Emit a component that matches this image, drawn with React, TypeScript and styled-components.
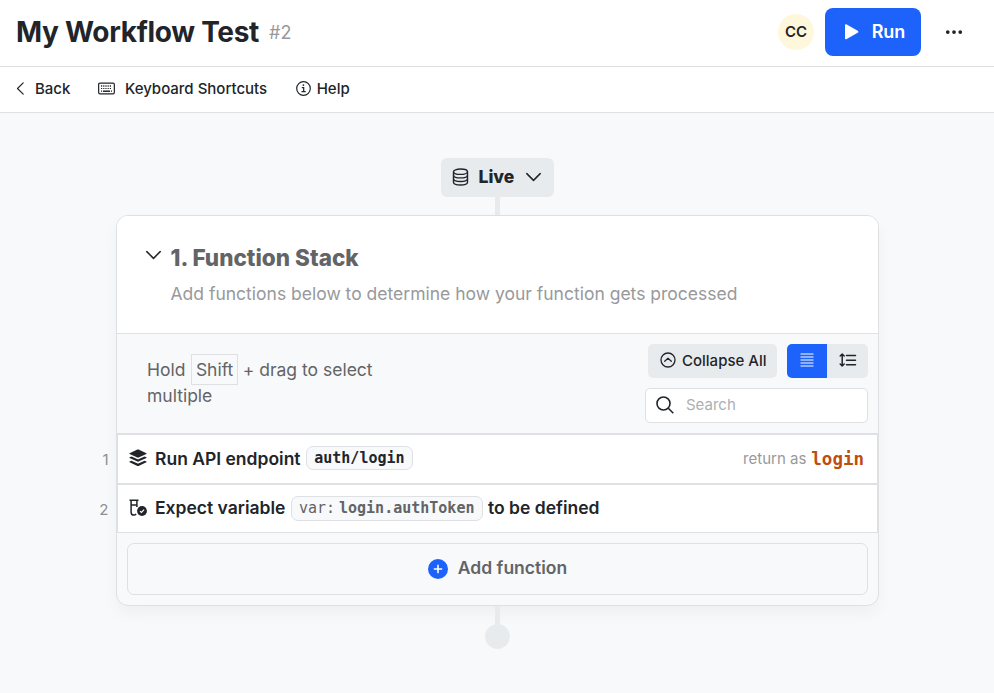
import React from "react";
import styled, { createGlobalStyle } from "styled-components";
import { BsThreeDots } from "react-icons/bs";

const GlobalStyle = createGlobalStyle`
  *, *::before, *::after { box-sizing: border-box; }
  body {
    margin: 0;
    background: #f8f9fb;
    color: #212529;
    font-family: Inter, "Liberation Sans", sans-serif;
    -webkit-font-smoothing: antialiased;
  }
  button, input { font-family: inherit; color: inherit; margin: 0; }
  svg { display: block; flex: none; }
`;

const mono = `"DejaVu Sans Mono", "Liberation Mono", monospace`;

const Page = styled.div`
  min-height: 693px;
  display: flex;
  flex-direction: column;
`;

const Header = styled.header`
  height: 67px;
  padding: 0 15px 2px 16px;
  display: flex;
  align-items: center;
  background: #fff;
  border-bottom: 1px solid #dee0e4;
`;

const Title = styled.h1`
  margin: 0;
  font-size: 28px;
  line-height: 34px;
  font-weight: 700;
  letter-spacing: -0.3px;
`;

const Revision = styled.span`
  margin-left: 10px;
  font-size: 18px;
  color: #97999b;
`;

const HeaderActions = styled.div`
  margin-left: auto;
  display: flex;
  align-items: center;
`;

const Avatar = styled.div`
  width: 36px;
  height: 36px;
  padding-bottom: 1px;
  border-radius: 50%;
  display: grid;
  place-items: center;
  background: #fff7db;
  font-size: 15px;
  font-weight: 600;
`;

const RunButton = styled.button`
  width: 96px;
  height: 48px;
  margin-left: 11px;
  padding: 0 16px 1px 19px;
  border: 0;
  border-radius: 8px;
  display: flex;
  align-items: center;
  justify-content: space-between;
  background: #1c62fb;
  color: #fff;
  font-size: 18px;
  font-weight: 600;
  letter-spacing: -0.2px;
`;

const MoreButton = styled.button`
  width: 48px;
  height: 48px;
  margin: 0 0 0 10px;
  padding: 0 2px 0 0;
  border: 0;
  display: grid;
  place-items: center;
  background: transparent;
`;

const Nav = styled.nav`
  height: 46px;
  padding: 0 13px 2px;
  display: flex;
  align-items: center;
  background: #fff;
  border-bottom: 1px solid #dee0e4;
`;

const NavItem = styled.a<{ $gap: number; $before?: number }>`
  display: flex;
  align-items: center;
  gap: ${(p) => p.$gap}px;
  margin-left: ${(p) => p.$before ?? 0}px;
  font-size: 15px;
  font-weight: 500;
`;

const Canvas = styled.main`
  flex: 1;
  padding-top: 45px;
  display: flex;
  flex-direction: column;
  align-items: center;
  padding-left: 1px;
`;

const EnvButton = styled.button`
  width: 113px;
  height: 39px;
  padding: 0 12.5px 2px 11px;
  border: 0;
  border-radius: 6px;
  display: flex;
  align-items: center;
  background: #e8ebee;
  font-size: 17.5px;
  font-weight: 800;

  span { margin: 0 auto 0 9.5px; }
`;

const Connector = styled.div`
  width: 5px;
  height: 18px;
  background: #e8ebee;
`;

const EndDot = styled.div`
  width: 25px;
  height: 25px;
  border-radius: 50%;
  background: #e8ebee;
`;

const Card = styled.section`
  width: 763px;
  height: 391px;
  border: 1px solid #dee0e4;
  border-radius: 12px;
  background: #f8f9fb;
  box-shadow: 0 8px 16px rgba(0, 0, 0, 0.04);
`;

const CardHead = styled.div`
  height: 118px;
  padding: 26px 28px 0 27.5px;
  border-bottom: 1px solid #dee0e4;
  border-radius: 11px 11px 0 0;
  display: flex;
  background: #fff;
`;

const CardToggle = styled.div`
  width: 26px;
  padding-top: 4px;
`;

const CardTitle = styled.h2`
  margin: 0;
  font-size: 22.5px;
  line-height: 32px;
  font-weight: 800;
  letter-spacing: 0.02px;
  color: #626466;
`;

const CardText = styled.p`
  margin: 7px 0 0;
  font-size: 17.5px;
  line-height: 26px;
  color: #97999b;
`;

const Toolbar = styled.div`
  height: 99px;
  padding: 10px 10px 0 30px;
  display: flex;
  justify-content: space-between;
`;

const Hint = styled.div`
  width: 256px;
  margin-top: 13px;
  font-size: 17.5px;
  line-height: 26px;
  color: #626466;
`;

const Key = styled.kbd`
  margin: 0 0 0 1px;
  padding: 4px 3.5px;
  border: 1px solid #dee0e4;
  font: inherit;
`;

const Controls = styled.div`
  width: 223px;
  display: flex;
  flex-direction: column;
  gap: 10px;
`;

const ControlRow = styled.div`
  display: flex;
  justify-content: flex-end;
  gap: 10px;
`;

const CollapseButton = styled.button`
  width: 129px;
  height: 34px;
  padding: 0 10.5px 2px 12px;
  border: 0;
  border-radius: 5px;
  display: flex;
  align-items: center;
  justify-content: space-between;
  background: #e8ebee;
  font-size: 15px;
  font-weight: 500;
`;

const Segments = styled.div`
  display: flex;
  border-radius: 5px;
  overflow: hidden;
`;

const Segment = styled.button<{ $active?: boolean }>`
  width: ${(p) => (p.$active ? 40 : 41)}px;
  height: 34px;
  padding: 0 0 3px 0;
  border: 0;
  display: grid;
  place-items: center;
  background: ${(p) => (p.$active ? "#1c62fb" : "#e8ebee")};
  color: ${(p) => (p.$active ? "#fff" : "#212529")};
`;

const SearchBox = styled.label`
  height: 35px;
  padding: 0 10px 2px;
  border: 1px solid #dee0e4;
  border-radius: 5px;
  display: flex;
  align-items: center;
  gap: 12px;
  background: #fff;

  input {
    flex: 1;
    min-width: 0;
    padding: 0;
    border: 0;
    outline: 0;
    background: transparent;
    font-size: 15px;
  }
  input::placeholder { color: #adafb1; opacity: 1; }
`;

const Steps = styled.ol`
  margin: 0;
  padding: 0;
  list-style: none;
`;

const Step = styled.li<{ $height: number }>`
  height: ${(p) => p.$height}px;
  margin-left: -20px;
  display: flex;
  align-items: center;
`;

const StepNumber = styled.span`
  width: 20px;
  padding: 1px 8.5px 0 0;
  text-align: right;
  font-size: 15px;
  color: #8d9093;
`;

const StepBody = styled.div<{ $first?: boolean }>`
  flex: 1;
  height: 100%;
  padding: 0 13px 2px 11px;
  border: 1px solid #dee0e4;
  border-top-width: ${(p) => (p.$first ? 2 : 1)}px;
  display: flex;
  align-items: center;
  background: #fff;
  font-size: 17.5px;
  font-weight: 600;
  white-space: pre;
`;

const StepLabel = styled.span`
  margin-left: 8px;
`;

const Chip = styled.code<{ $muted?: boolean }>`
  height: ${(p) => (p.$muted ? 25 : 24)}px;
  margin: ${(p) => (p.$muted ? "2px 5px 0 6px" : "0 5px 0 5.5px")};
  padding: 0 ${(p) => (p.$muted ? 7.5 : 7.3)}px 1px ${(p) => (p.$muted ? 6.5 : 7.2)}px;
  border: 1px solid #dee0e4;
  border-radius: 7px;
  display: flex;
  align-items: center;
  background: #f8f9fb;
  color: ${(p) => (p.$muted ? "#626466" : "#212529")};
  font: 700 15px/20px ${mono};

  em { font-style: normal; font-weight: 400; margin-right: 4px; }
`;

const ReturnAs = styled.span`
  margin-left: auto;
  font-size: 15px;
  font-weight: 400;
  color: #97999b;
`;

const ReturnName = styled.code`
  margin-left: 5px;
  padding-top: 1px;
  font: 700 17.5px/24px ${mono};
  color: #bd4e0e;
`;

const AddButton = styled.button`
  width: 741px;
  height: 52px;
  margin: 10px 10px 0;
  padding: 0 0 3px;
  border: 1px solid #dee0e4;
  border-radius: 7px;
  display: flex;
  align-items: center;
  justify-content: center;
  gap: 10px;
  background: transparent;
  color: #626466;
  font-size: 17.5px;
  font-weight: 600;

  svg { margin-top: 3px; }
`;

const PlayIcon = () => (
  <svg width="15" height="16" viewBox="0 0 15 16" fill="currentColor">
    <path d="M1 1.3C1 .4 1.9 0 2.7.4l11 6.3c.9.5.9 1.6 0 2.1l-11 6.3c-.8.5-1.7 0-1.7-.9z" />
  </svg>
);

const BackIcon = () => (
  <svg width="15" height="15" viewBox="0 0 15 15" fill="none" stroke="currentColor" strokeWidth="1.2" strokeLinecap="round" strokeLinejoin="round">
    <path d="M10.2 1.8 4.5 7.5l5.7 5.7" />
  </svg>
);

const KeyboardIcon = () => (
  <svg width="17" height="13" viewBox="0 0 17 13" fill="none" stroke="currentColor">
    <rect x=".65" y="1.15" width="15.7" height="10.7" rx="1.3" strokeWidth="1.2" />
    <path d="M3 4h11" strokeWidth="1.3" strokeDasharray="1.2 1" />
    <path d="M3 6.5h11" strokeWidth="1.2" strokeDasharray="1.2 1" />
    <path d="M5 9.2h7" strokeWidth="1.5" />
    <path d="M3 9.2h1.1M12.9 9.2h1.1" strokeWidth="1.2" />
  </svg>
);

const InfoIcon = () => (
  <svg width="15" height="15" viewBox="0 0 15 15" fill="none" stroke="currentColor" strokeWidth="1.2">
    <circle cx="7.5" cy="7.5" r="6.8" />
    <circle cx="7.4" cy="4.1" r=".9" fill="currentColor" stroke="none" />
    <path d="M5.8 6.6h1.9v4M5.5 10.7h4.2" />
  </svg>
);

const DatabaseIcon = () => (
  <svg width="17" height="18" viewBox="0 0 17 18" fill="none" stroke="currentColor" strokeWidth="1.4">
    <ellipse cx="8.5" cy="3.7" rx="7" ry="2.7" />
    <path d="M1.5 3.7v10.6c0 1.5 3.1 2.7 7 2.7s7-1.2 7-2.7V3.7" />
    <path d="M1.5 7.2c0 1.5 3.1 2.7 7 2.7s7-1.2 7-2.7M1.5 10.8c0 1.5 3.1 2.7 7 2.7s7-1.2 7-2.7" />
  </svg>
);

const ChevronDownIcon = () => (
  <svg width="17" height="17" viewBox="0 0 17 17" fill="none" stroke="currentColor" strokeWidth="1.5" strokeLinecap="round" strokeLinejoin="round">
    <path d="m1.8 5.6 6.7 6.8 6.7-6.8" />
  </svg>
);

const SearchIcon = () => (
  <svg width="18" height="18" viewBox="0 0 18 18" fill="none" stroke="currentColor" strokeWidth="1.6">
    <circle cx="7.5" cy="7.5" r="6.5" />
    <path d="m12.3 12.3 5 5" />
  </svg>
);

const CollapseIcon = () => (
  <svg width="16" height="16" viewBox="0 0 16 16" fill="none" stroke="currentColor" strokeWidth="1.3">
    <circle cx="8" cy="8" r="7" />
    <path d="M4.7 9.3 8 6.2l3.3 3.1" strokeLinecap="round" strokeLinejoin="round" />
  </svg>
);

const CompactIcon = () => (
  <svg width="14" height="14" viewBox="0 0 14 14" stroke="currentColor" strokeWidth="1">
    <path d="M.5 1h13M.5 4h13M.5 7h13M.5 10h13M.5 13h13" />
  </svg>
);

const SpacingIcon = () => (
  <svg width="18" height="14" viewBox="0 0 18 14" fill="none" stroke="currentColor" strokeWidth="1.5" strokeLinecap="round" strokeLinejoin="round">
    <path d="M3.2 1.2v11.6M1.2 3 3.2 1l2 2M1.2 11l2 2 2-2M7.5 2.5h9M7.5 7.2h9M7.5 11.8h9" />
  </svg>
);

const StackIcon = () => (
  <svg width="18" height="18" viewBox="0 0 18 18" fill="currentColor">
    <path d="M8.4.5q.6-.25 1.2 0l7.8 3.7q.6.3 0 .7L9.6 8.5q-.6.25-1.2 0L.6 4.9Q0 4.5.6 4.2z" />
    <path d="M2.5 7.4 8.1 10q.9.4 1.8 0l5.6-2.6 1.9.9q.6.3 0 .7l-7.8 3.6q-.6.25-1.2 0L.6 9Q0 8.6.6 8.3z" />
    <path d="M2.5 11.7l5.6 2.6q.9.4 1.8 0l5.6-2.6 1.9.9q.6.3 0 .7l-7.8 3.6q-.6.25-1.2 0L.6 13.3q-.6-.4 0-.7z" />
  </svg>
);

const TestIcon = () => (
  <svg width="18" height="18" viewBox="0 0 18 18" fill="none">
    <path d="M.5 1.3h9M2.1 1.3v11.9c0 1.7 1.1 2.9 2.7 2.9 1 0 1.8-.4 2.3-1.2M7.9 1.3v6.8M2.1 6h5.8" stroke="currentColor" strokeWidth="1.5" />
    <circle cx="13" cy="12" r="4.9" fill="currentColor" />
    <path d="m11 12.1 1.4 1.4 2.7-2.8" stroke="#fff" strokeWidth="1.2" />
  </svg>
);

const PlusIcon = () => (
  <svg width="20" height="20" viewBox="0 0 20 20">
    <circle cx="10" cy="10" r="10" fill="#1c62fb" />
    <path d="M10 6.4v7.2M6.4 10h7.2" stroke="#fff" strokeWidth="1.6" strokeLinecap="round" />
  </svg>
);

export default function App() {
  return (
    <Page>
      <GlobalStyle />
      <Header>
        <Title>My Workflow Test</Title>
        <Revision>#2</Revision>
        <HeaderActions>
          <Avatar>CC</Avatar>
          <RunButton>
            <PlayIcon />
            Run
          </RunButton>
          <MoreButton aria-label="More">
            <BsThreeDots size={20} />
          </MoreButton>
        </HeaderActions>
      </Header>
      <Nav>
        <NavItem $gap={7}>
          <BackIcon />
          Back
        </NavItem>
        <NavItem $gap={10} $before={27.5}>
          <KeyboardIcon />
          Keyboard Shortcuts
        </NavItem>
        <NavItem $gap={6} $before={28.5}>
          <InfoIcon />
          Help
        </NavItem>
      </Nav>
      <Canvas>
        <EnvButton>
          <DatabaseIcon />
          <span>Live</span>
          <ChevronDownIcon />
        </EnvButton>
        <Connector />
        <Card>
          <CardHead>
            <CardToggle>
              <ChevronDownIcon />
            </CardToggle>
            <div>
              <CardTitle>1. Function Stack</CardTitle>
              <CardText>Add functions below to determine how your function gets processed</CardText>
            </div>
          </CardHead>
          <Toolbar>
            <Hint>
              Hold <Key>Shift</Key> + drag to select multiple
            </Hint>
            <Controls>
              <ControlRow>
                <CollapseButton>
                  <CollapseIcon />
                  Collapse All
                </CollapseButton>
                <Segments>
                  <Segment $active aria-label="Compact">
                    <CompactIcon />
                  </Segment>
                  <Segment aria-label="Spacious">
                    <SpacingIcon />
                  </Segment>
                </Segments>
              </ControlRow>
              <SearchBox>
                <SearchIcon />
                <input placeholder="Search" />
              </SearchBox>
            </Controls>
          </Toolbar>
          <Steps>
            <Step $height={51}>
              <StepNumber>1</StepNumber>
              <StepBody $first>
                <StackIcon />
                <StepLabel>Run API endpoint</StepLabel>
                <Chip>auth/login</Chip>
                <ReturnAs>return as</ReturnAs>
                <ReturnName>login</ReturnName>
              </StepBody>
            </Step>
            <Step $height={49}>
              <StepNumber>2</StepNumber>
              <StepBody>
                <TestIcon />
                <StepLabel>Expect variable</StepLabel>
                <Chip $muted>
                  <em>var:</em>login.authToken
                </Chip>
                <span>to be defined</span>
              </StepBody>
            </Step>
          </Steps>
          <AddButton>
            <PlusIcon />
            Add function
          </AddButton>
        </Card>
        <Connector />
        <EndDot />
      </Canvas>
    </Page>
  );
}
